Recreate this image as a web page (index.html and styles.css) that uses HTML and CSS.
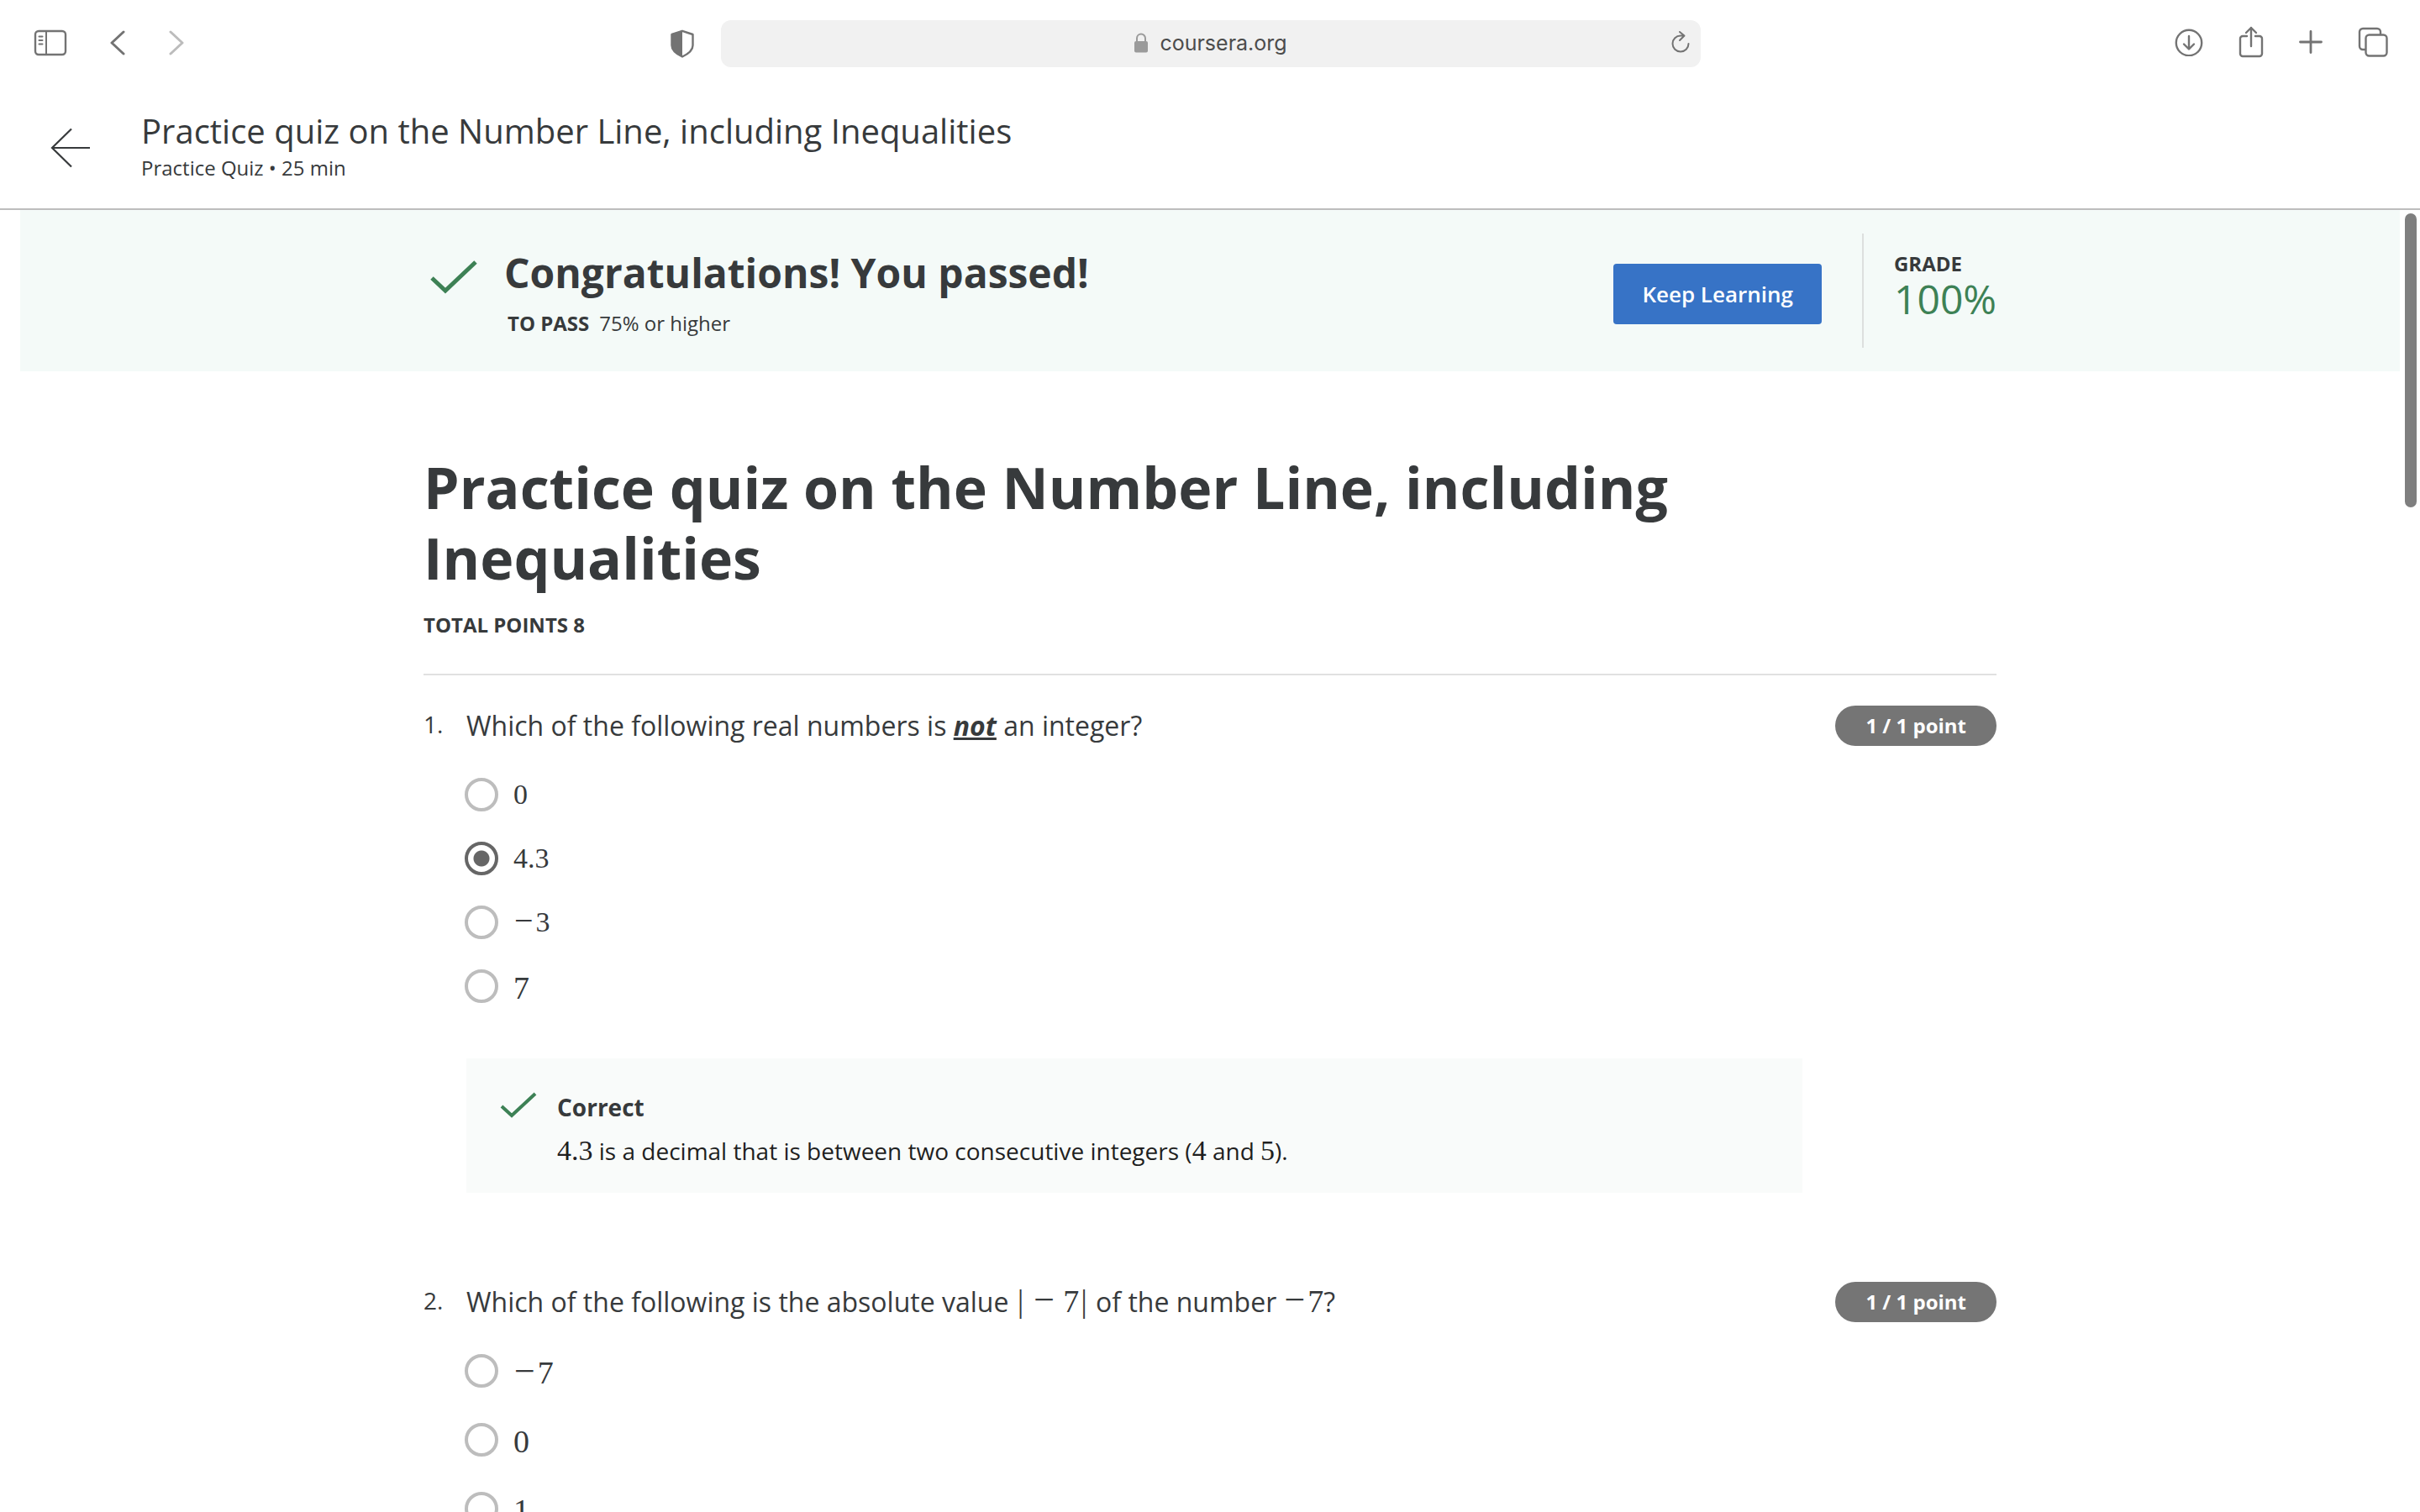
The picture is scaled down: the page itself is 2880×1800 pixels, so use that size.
FILE: index.html
```html
<!DOCTYPE html>
<html lang="en">
<head>
<meta charset="utf-8">
<title>Practice quiz on the Number Line, including Inequalities | Coursera</title>
<meta name="viewport" content="width=device-width, initial-scale=1">
<link rel="stylesheet" href="styles.css">
</head>
<body>
<div class="window">
  <div class="toolbar">
    <div class="toolbar-left">
      <button class="icon-button" aria-label="Show sidebar"><svg width="40" height="32" viewBox="0 0 40 32" fill="none" stroke="currentColor" stroke-width="2.400"><rect x="2" y="2" width="36" height="28" rx="4"/><path d="M15 2v28M6.500 8.500h4M6.500 13h4M6.500 17.500h4" stroke-width="2" stroke-linecap="round"/></svg></button>
      <button class="icon-button" aria-label="Back"><svg width="20" height="30" viewBox="0 0 20 30" fill="none" stroke="currentColor" stroke-width="3" stroke-linecap="round" stroke-linejoin="round"><path d="M17 2 3 15l14 13"/></svg></button>
      <button class="icon-button icon-disabled" aria-label="Forward" disabled><svg width="20" height="30" viewBox="0 0 20 30" fill="none" stroke="currentColor" stroke-width="3" stroke-linecap="round" stroke-linejoin="round"><path d="m3 2 14 13L3 28"/></svg></button>
    </div>
    <div class="toolbar-center">
      <button class="icon-button" aria-label="Privacy report"><svg width="28" height="34" viewBox="0 0 28 34"><path d="M14 1.800 26.500 6v13c0 6-5 10-12.500 13.500C6.500 29 1.500 25 1.500 19V6z" fill="none" stroke="currentColor" stroke-width="2.400" stroke-linejoin="round"/><path d="M14 1 1 6v13c0 6 5 10 13 14z" fill="currentColor"/></svg></button>
      <div class="address">
        <a class="address-link" href="#quiz"><svg width="16" height="24" viewBox="0 0 16 24"><rect y="10" width="16" height="13.500" rx="2" fill="currentColor"/><path d="M3 11V6.500a5 5 0 0 1 10 0V11" fill="none" stroke="currentColor" stroke-width="2"/></svg><span>coursera.org</span></a>
        <button class="icon-button reload" aria-label="Reload"><svg width="24" height="28" viewBox="0 0 24 28" fill="none" stroke="currentColor" stroke-width="2" stroke-linecap="round" stroke-linejoin="round"><path d="M21.500 16A9.500 9.500 0 1 1 12 6.500h4M11 2l5.500 4.500L11 12"/></svg></button>
      </div>
    </div>
    <div class="toolbar-right">
      <button class="icon-button" aria-label="Downloads"><svg width="34" height="34" viewBox="0 0 34 34" fill="none" stroke="currentColor" stroke-width="2.400" stroke-linecap="round" stroke-linejoin="round"><circle cx="17" cy="18" r="15.200"/><path d="M17 10v15M11 19.500l6 6 6-6"/></svg></button>
      <button class="icon-button" aria-label="Share"><svg width="30" height="38" viewBox="0 0 30 38" fill="none" stroke="currentColor" stroke-width="2.400" stroke-linecap="round" stroke-linejoin="round"><path d="M10 12H5a3 3 0 0 0-3 3v18a3 3 0 0 0 3 3h20a3 3 0 0 0 3-3V15a3 3 0 0 0-3-3h-5M15 24V2M9 8l6-6 6 6"/></svg></button>
      <button class="icon-button" aria-label="New tab"><svg width="28" height="28" viewBox="0 0 28 28" fill="none" stroke="currentColor" stroke-width="2.800" stroke-linecap="round"><path d="M14 1.500v25M1.500 14h25"/></svg></button>
      <button class="icon-button" aria-label="Tab overview"><svg width="36" height="36" viewBox="0 0 36 36" fill="none" stroke="currentColor" stroke-width="2.400"><rect x="9.500" y="9.500" width="25" height="25" rx="4"/><path d="M9.500 27H6a4 4 0 0 1-4-4V6a4 4 0 0 1 4-4h17a4 4 0 0 1 4 4v3"/></svg></button>
    </div>
  </div>

  <header class="quiz-header">
    <a class="back" href="#course" aria-label="Back to course"><svg width="48" height="48" viewBox="0 0 48 48" fill="none" stroke="currentColor" stroke-width="2.200"><path d="M47 24H2M25 1.500 2 24l23 22.500"/></svg></a>
    <div class="quiz-heading">
      <div class="quiz-name">Practice quiz on the Number Line, including Inequalities</div>
      <div class="quiz-meta">Practice Quiz • 25 min</div>
    </div>
  </header>

  <main class="page" id="quiz">
    <section class="banner">
      <div class="column banner-row">
        <svg class="banner-check" width="56" height="42" viewBox="0 0 56 42" fill="none" stroke="currentColor" stroke-width="5"><path d="M2 22l16 15L54 3"/></svg>
        <div class="banner-text">
          <h2 class="banner-title">Congratulations! You passed!</h2>
          <p class="to-pass"><strong>TO PASS</strong><span>75% or higher</span></p>
        </div>
        <button class="keep">Keep Learning</button>
        <div class="grade">
          <div class="grade-label">GRADE</div>
          <div class="grade-value">100%</div>
        </div>
      </div>
    </section>

    <div class="column">
      <h1 class="title">Practice quiz on the Number Line, including Inequalities</h1>
      <div class="total">TOTAL POINTS 8</div>

      <section class="question">
        <div class="number">1.</div>
        <div class="body">
          <p class="prompt" id="q1">Which of the following real numbers is <strong class="stress">not</strong> an integer?</p>
          <div class="options" role="radiogroup" aria-labelledby="q1">
            <label class="option"><input type="radio" name="q1"><span class="math">0</span></label>
            <label class="option"><input type="radio" name="q1" checked><span class="math">4.3</span></label>
            <label class="option"><input type="radio" name="q1"><span class="math"><span class="minus">−</span>3</span></label>
            <label class="option"><input type="radio" name="q1"><span class="math math-large">7</span></label>
          </div>
          <div class="feedback">
            <svg class="feedback-check" width="44" height="32" viewBox="0 0 44 32" fill="none" stroke="currentColor" stroke-width="4"><path d="M2 17l12 11L42 2"/></svg>
            <div>
              <div class="feedback-title">Correct</div>
              <p class="feedback-text"><span class="math">4.3</span> is a decimal that is between two consecutive integers (<span class="math">4</span> and <span class="math">5</span>).</p>
            </div>
          </div>
        </div>
        <div class="points">1 / 1 point</div>
      </section>

      <section class="question">
        <div class="number">2.</div>
        <div class="body">
          <p class="prompt" id="q2">Which of the following is the absolute value <span class="math math-large"><span class="bar">|</span><span class="minus operator">−</span>7<span class="bar">|</span></span> of the number <span class="math math-large"><span class="minus">−</span>7</span>?</p>
          <div class="options options-loose" role="radiogroup" aria-labelledby="q2">
            <label class="option"><input type="radio" name="q2"><span class="math math-large"><span class="minus">−</span>7</span></label>
            <label class="option"><input type="radio" name="q2"><span class="math math-large">0</span></label>
            <label class="option"><input type="radio" name="q2"><span class="math math-large">1</span></label>
          </div>
        </div>
        <div class="points">1 / 1 point</div>
      </section>
    </div>
    <div class="scroll-thumb"></div>
  </main>
</div>
</body>
</html>
```

FILE: styles.css
```css
* {
  box-sizing: border-box;
}

body {
  margin: 0;
  background: #fff;
  color: #373a3c;
  font-family: "Open Sans", sans-serif;
  font-size: 32px;
}

h1, h2, p {
  margin: 0;
}

button {
  font: inherit;
  border: 0;
  cursor: pointer;
}

svg {
  display: block;
  flex: none;
}

.window {
  height: 100vh;
  display: flex;
  flex-direction: column;
  overflow: hidden;
}

/* Browser toolbar */

.toolbar {
  flex: none;
  display: grid;
  grid-template-columns: 1fr minmax(0, 1286px) 1fr;
  align-items: center;
  height: 104px;
  padding: 0 38px 0 40px;
  color: #737373;
}

.toolbar-left,
.toolbar-right,
.toolbar-center {
  display: flex;
  align-items: center;
}

.toolbar-left {
  gap: 50px;
  padding-bottom: 2px;
}

.toolbar-right {
  justify-content: flex-end;
  gap: 42px;
  padding-bottom: 4px;
}

.toolbar-center {
  gap: 32px;
  padding-right: 60px;
}

.icon-button {
  padding: 0;
  background: none;
  color: inherit;
}

.icon-disabled {
  color: #bcbcbc;
}

.address {
  position: relative;
  flex: 1;
  display: flex;
  align-items: center;
  justify-content: center;
  height: 56px;
  border-radius: 12px;
  background: #f1f1f1;
}

.address-link {
  display: flex;
  align-items: center;
  gap: 14px;
  padding-bottom: 2px;
  color: #9b9b9b;
  font-family: Inter, sans-serif;
  font-size: 25px;
  text-decoration: none;
}

.address-link span {
  color: #4c4c4c;
}

.reload {
  position: absolute;
  right: 12px;
  padding-bottom: 4px;
}

/* Quiz header */

.quiz-header {
  flex: none;
  display: flex;
  align-items: center;
  gap: 60px;
  height: 146px;
  padding: 0 60px;
  border-bottom: 2px solid #bdbdbd;
}

.back {
  color: #373a3c;
}

.quiz-heading {
  padding-bottom: 4px;
}

.quiz-name {
  font-size: 40px;
  line-height: 52px;
}

.quiz-meta {
  font-size: 24px;
  line-height: 36px;
}

/* Scrolling page */

.page {
  position: relative;
  flex: 1;
  min-height: 0;
  overflow: hidden;
  padding: 0 24px;
}

.column {
  max-width: 1872px;
  margin: 0 auto;
}

.scroll-thumb {
  position: absolute;
  top: 4px;
  right: 4px;
  width: 14px;
  height: 350px;
  border-radius: 7px;
  background: #7f7f7f;
}

/* Result banner */

.banner {
  padding: 28px 0;
  background: #f4faf8;
}

.banner-row {
  display: flex;
  align-items: center;
  height: 136px;
}

.banner-check {
  margin: 0 32px 32px 8px;
  color: #3d8155;
}

.banner-text {
  flex: 1;
  padding-top: 4px;
}

.banner-title {
  font-size: 48px;
  font-weight: 700;
  line-height: 64px;
}

.to-pass {
  display: flex;
  gap: 12px;
  padding: 10px 0 0 4px;
  font-size: 24px;
  line-height: 36px;
}

.keep {
  height: 72px;
  margin: 8px 48px 0 0;
  padding: 0 34px;
  border-radius: 4px;
  background: #3773c6;
  color: #fff;
  font-size: 26px;
  font-weight: 600;
}

.grade {
  align-self: stretch;
  padding: 18px 0 0 36px;
  border-left: 2px solid #dcdfde;
}

.grade-label {
  font-size: 24px;
  font-weight: 700;
  line-height: 36px;
}

.grade-value {
  color: #3d8155;
  font-size: 48px;
  line-height: 48px;
}

/* Quiz body */

.title {
  margin-top: 96px;
  font-size: 68px;
  font-weight: 700;
  line-height: 84px;
}

.total {
  margin-bottom: 36px;
  padding: 20px 0 40px;
  border-bottom: 2px solid #e1e1e1;
  font-size: 24px;
  font-weight: 700;
  line-height: 36px;
}

.question {
  display: grid;
  grid-template-columns: 51px minmax(0, 1fr) auto;
  align-items: start;
  margin-bottom: 106px;
}

.number {
  font-size: 28px;
  line-height: 44px;
}

.prompt {
  line-height: 48px;
}

.stress {
  font-style: italic;
  text-decoration: underline;
}

.points {
  padding: 0 36px;
  border-radius: 24px;
  background: #757575;
  color: #fff;
  font-size: 24px;
  font-weight: 700;
  line-height: 48px;
}

.options {
  display: grid;
  gap: 36px;
  padding: 38px 0 0;
}

.options-loose {
  gap: 42px;
}

.option {
  display: flex;
  align-items: center;
  gap: 18px;
  height: 40px;
}

.option input {
  appearance: none;
  flex: none;
  width: 40px;
  height: 40px;
  margin: 0 0 0 -2px;
  border: 4px solid #bdbdbd;
  border-radius: 50%;
}

.option input:checked {
  border-color: #666;
  background: radial-gradient(circle, #666 9px, transparent 10px);
}

.math {
  font-family: "Liberation Serif", serif;
  font-size: 34px;
  line-height: 1;
}

.math-large {
  font-size: 38px;
}

.option .math-large {
  padding-top: 4px;
}

.minus {
  margin: 0 3px 0 1px;
  font-size: 40px;
  line-height: 0;
}

.math-large .minus {
  font-size: 44px;
}

.math-large .operator {
  margin: 0 10px;
}

.bar {
  margin: 0 2px;
}

.feedback {
  display: flex;
  gap: 24px;
  width: 1590px;
  max-width: 100%;
  margin-top: 66px;
  padding: 38px 40px 30px;
  background: #f9fbfa;
}

.feedback-title {
  font-size: 28px;
  font-weight: 700;
  line-height: 40px;
}

.feedback-text {
  margin-top: 12px;
  color: #1f1f1f;
  font-size: 28px;
  line-height: 40px;
}

.feedback-check {
  margin-top: 2px;
  color: #3d8155;
}
```
